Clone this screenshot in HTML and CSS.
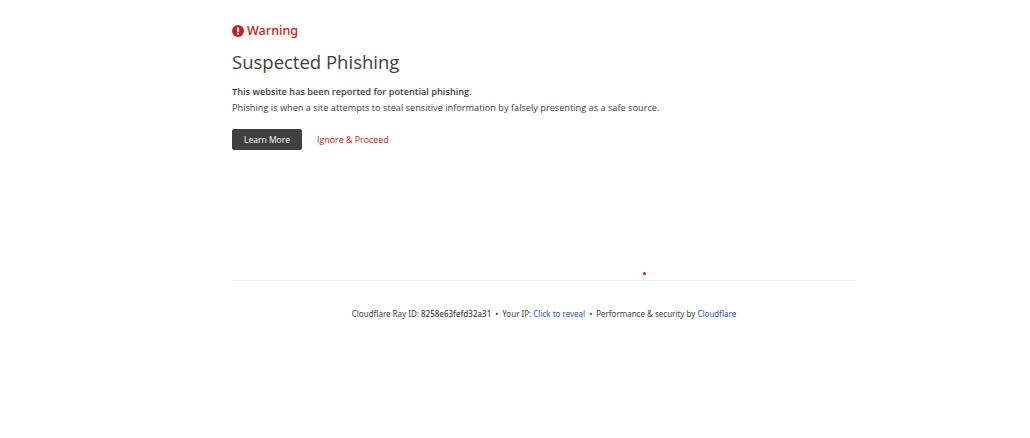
FILE: index.html
```html
<!DOCTYPE html>
<html>
<head>
  <meta charset="UTF-8">
  <title>Suspected Phishing</title>
  <link rel="stylesheet" href="styles.css">
</head>
<body>
  <div class="container">
    <div class="main-content">
      <h2 class="warning">
        <svg class="warning-icon" viewBox="0 0 16 16" width="12" height="12">
          <circle cx="8" cy="8" r="8" fill="#bd2426"/>
          <rect x="6.8" y="3" width="2.4" height="6.6" rx="1" fill="#fff"/>
          <circle cx="8" cy="11.8" r="1.4" fill="#fff"/>
        </svg>
        Warning
      </h2>
      <h1 class="title">Suspected Phishing</h1>
      <p class="lead">This website has been reported for potential phishing.</p>
      <p class="desc">Phishing is when a site attempts to steal sensitive information by falsely presenting as a safe source.</p>
      <div class="actions">
        <a class="btn" href="#">Learn More</a>
        <a class="ignore" href="#">Ignore &amp; Proceed</a>
      </div>
    </div>
    <div class="dot"></div>
    <div class="footer">
      <span>Cloudflare Ray ID: <strong>8258e63fefd32a31</strong></span>
      <span class="sep">•</span>
      <span>Your IP: <a href="#">Click to reveal</a></span>
      <span class="sep">•</span>
      <span>Performance &amp; security by <a href="#">Cloudflare</a></span>
    </div>
  </div>
</body>
</html>
```

FILE: styles.css
```css
html, body {
  margin: 0;
  padding: 0;
  background: #fff;
}
body {
  font-family: "Open Sans", "Liberation Sans", sans-serif;
  color: #404040;
}
.container {
  position: relative;
  width: 624px;
  margin-left: 232px;
  padding-top: 22px;
}
.main-content {
  height: 258px;
  border-bottom: 1px solid #eeeeee;
}
.warning {
  display: flex;
  align-items: center;
  gap: 3px;
  margin: 0;
  font-family: "Noto Sans", "Liberation Sans", sans-serif;
  font-size: 12.6px;
  line-height: 18px;
  font-weight: 500;
  color: #bd2426;
}
.warning-icon {
  flex: none;
}
.title {
  margin: 8px 0 0;
  font-size: 18.5px;
  line-height: 27px;
  font-weight: 400;
  color: #404040;
}
.lead {
  margin: 9px 0 0;
  font-size: 9.2px;
  line-height: 16px;
  font-weight: 600;
}
.desc {
  margin: 0;
  font-size: 9.2px;
  line-height: 16px;
}
.actions {
  display: flex;
  align-items: center;
  gap: 15px;
  margin-top: 13px;
}
.btn {
  padding: 0 12px;
  width: 46px;
  height: 21px;
  line-height: 21px;
  background: #404040;
  border-radius: 2px;
  color: #fff;
  font-size: 8.5px;
  text-align: center;
  text-decoration: none;
}
.ignore {
  color: #bd2426;
  font-size: 8.9px;
  text-decoration: none;
}
.dot {
  position: absolute;
  left: 411px;
  top: 272px;
  width: 3px;
  height: 3px;
  border-radius: 50%;
  background: #e01010;
}
.footer {
  display: flex;
  justify-content: center;
  gap: 4px;
  margin-top: 26px;
  font-family: "Noto Sans", "Liberation Sans", sans-serif;
  font-size: 8px;
  line-height: 13px;
  color: #404040;
}
.footer strong {
  font-weight: 500;
}
.footer a {
  color: #2f4fb0;
  text-decoration: none;
}
```
